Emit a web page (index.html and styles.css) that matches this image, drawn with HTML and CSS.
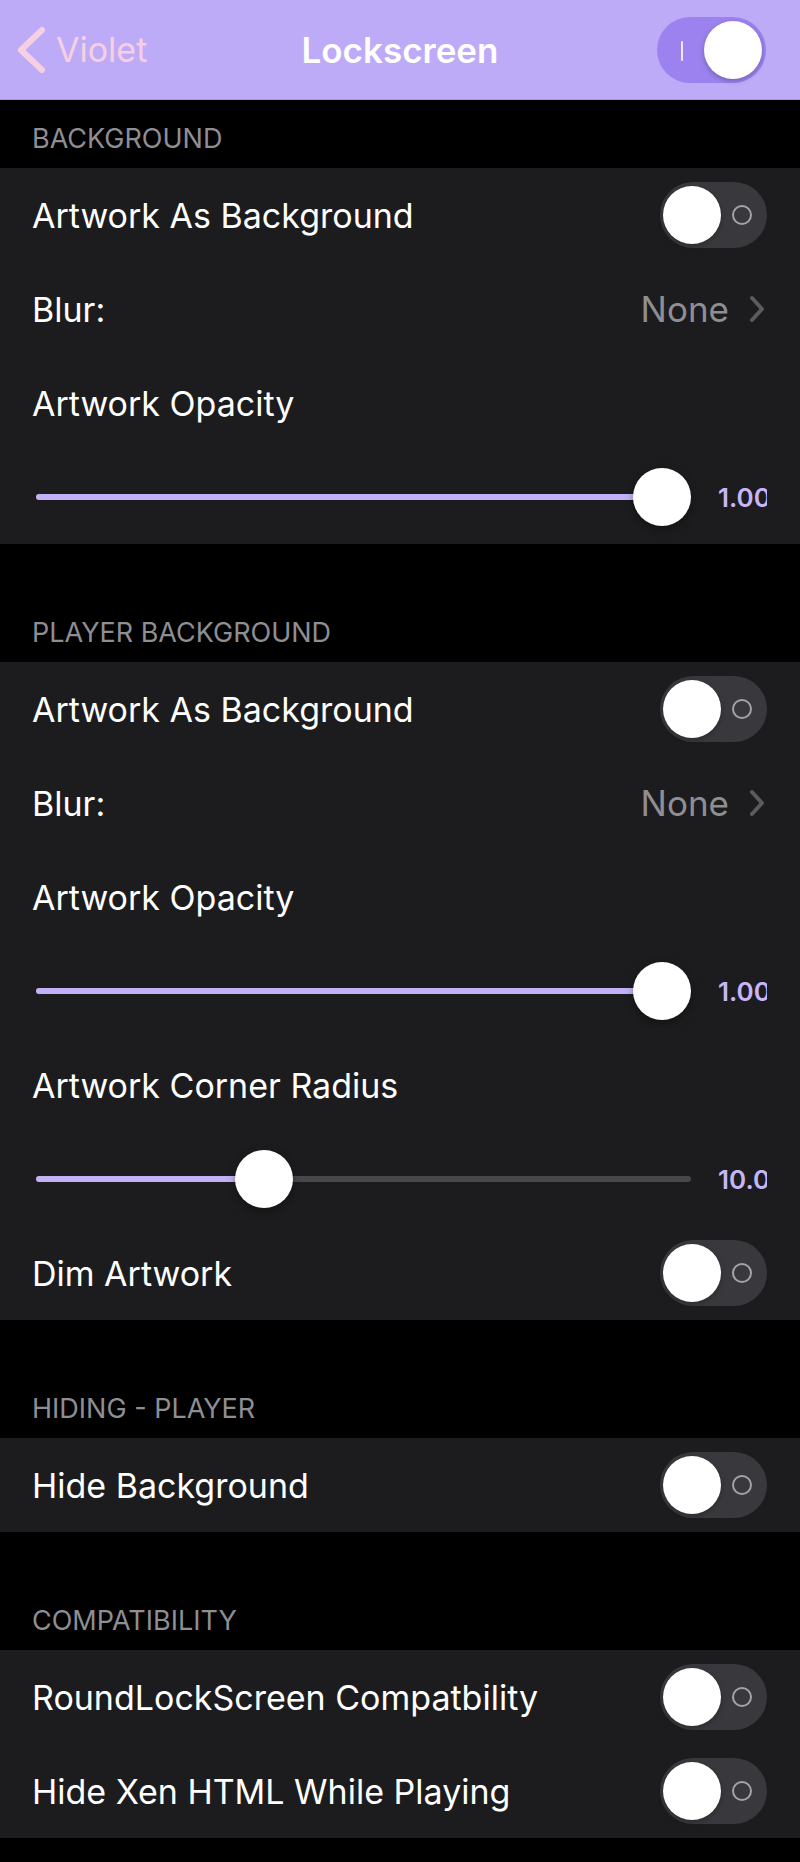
FILE: index.html
```html
<!DOCTYPE html>
<html lang="en">
<head>
  <meta charset="UTF-8">
  <meta name="viewport" content="width=device-width, initial-scale=1.0">
  <title>Lockscreen</title>
  <link rel="stylesheet" href="styles.css">
</head>
<body>
  <header class="navbar">
    <a class="back" href="#">
      <svg class="back-chevron" width="30" height="48" viewBox="0 0 30 48">
        <path d="M26 4 L5 24 L26 44" fill="none" stroke="currentColor" stroke-width="6" stroke-linecap="round" stroke-linejoin="round"/>
      </svg>
      <span>Violet</span>
    </a>
    <h1 class="title">Lockscreen</h1>
    <span class="switch on"><span class="switch-mark"></span><span class="knob"></span></span>
  </header>

  <!-- Background -->
  <section class="group first">
    <h2 class="group-title">BACKGROUND</h2>
    <div class="cells">
      <div class="cell">
        <span class="label">Artwork As Background</span>
        <span class="switch"><span class="knob"></span><span class="switch-mark"></span></span>
      </div>
      <div class="cell">
        <span class="label">Blur:</span>
        <span class="detail">None
          <svg class="chevron" width="16" height="28" viewBox="0 0 16 28"><path d="M3 3 L13 14 L3 25" fill="none" stroke="currentColor" stroke-width="4" stroke-linecap="round" stroke-linejoin="round"/></svg>
        </span>
      </div>
      <div class="cell">
        <span class="label">Artwork Opacity</span>
      </div>
      <div class="cell">
        <div class="slider">
          <div class="track"><div class="fill" style="width: 626px"></div></div>
          <span class="thumb" style="left: 597px"></span>
        </div>
        <span class="value">1.00</span>
      </div>
    </div>
  </section>

  <!-- Player background -->
  <section class="group">
    <h2 class="group-title">PLAYER BACKGROUND</h2>
    <div class="cells">
      <div class="cell">
        <span class="label">Artwork As Background</span>
        <span class="switch"><span class="knob"></span><span class="switch-mark"></span></span>
      </div>
      <div class="cell">
        <span class="label">Blur:</span>
        <span class="detail">None
          <svg class="chevron" width="16" height="28" viewBox="0 0 16 28"><path d="M3 3 L13 14 L3 25" fill="none" stroke="currentColor" stroke-width="4" stroke-linecap="round" stroke-linejoin="round"/></svg>
        </span>
      </div>
      <div class="cell">
        <span class="label">Artwork Opacity</span>
      </div>
      <div class="cell">
        <div class="slider">
          <div class="track"><div class="fill" style="width: 626px"></div></div>
          <span class="thumb" style="left: 597px"></span>
        </div>
        <span class="value">1.00</span>
      </div>
      <div class="cell">
        <span class="label">Artwork Corner Radius</span>
      </div>
      <div class="cell">
        <div class="slider">
          <div class="track"><div class="fill" style="width: 228px"></div></div>
          <span class="thumb" style="left: 199px"></span>
        </div>
        <span class="value">10.0</span>
      </div>
      <div class="cell">
        <span class="label">Dim Artwork</span>
        <span class="switch"><span class="knob"></span><span class="switch-mark"></span></span>
      </div>
    </div>
  </section>

  <!-- Hiding -->
  <section class="group">
    <h2 class="group-title">HIDING - PLAYER</h2>
    <div class="cells">
      <div class="cell">
        <span class="label">Hide Background</span>
        <span class="switch"><span class="knob"></span><span class="switch-mark"></span></span>
      </div>
    </div>
  </section>

  <!-- Compatibility -->
  <section class="group">
    <h2 class="group-title">COMPATIBILITY</h2>
    <div class="cells">
      <div class="cell">
        <span class="label">RoundLockScreen Compatbility</span>
        <span class="switch"><span class="knob"></span><span class="switch-mark"></span></span>
      </div>
      <div class="cell">
        <span class="label">Hide Xen HTML While Playing</span>
        <span class="switch"><span class="knob"></span><span class="switch-mark"></span></span>
      </div>
    </div>
  </section>
</body>
</html>
```

FILE: styles.css
```css
body {
  margin: 0;
  background: #000;
  color: #fff;
  font-family: Inter, "Noto Sans", sans-serif;
}
.navbar {
  height: 99px;
  border-bottom: 1px solid #a592e6;
  background: #bdabf7;
  display: flex;
  align-items: center;
  justify-content: space-between;
  padding: 0 34px 0 16px;
  position: relative;
}
.back {
  display: flex;
  align-items: center;
  gap: 10px;
  color: #f6d0e2;
  text-decoration: none;
  font-size: 34px;
}
.title {
  position: absolute;
  left: 0;
  right: 0;
  margin: 0;
  text-align: center;
  font-size: 35px;
  font-weight: 600;
  pointer-events: none;
}
.group {
  margin-top: 50px;
}
.group.first {
  margin-top: 0;
}
.group-title {
  margin: 0;
  height: 68px;
  box-sizing: border-box;
  padding: 0 32px 13px;
  display: flex;
  align-items: flex-end;
  font-size: 27px;
  font-weight: 400;
  color: #8e8e93;
}
.cells {
  background: #1c1c1e;
}
.cell {
  height: 94px;
  display: flex;
  align-items: center;
  justify-content: space-between;
  padding: 0 33px 0 32px;
}
.label {
  font-size: 34px;
}
.detail {
  display: flex;
  align-items: center;
  gap: 20px;
  font-size: 35px;
  color: #8e8e93;
}
.chevron {
  color: #5a5a5f;
  margin-right: 2px;
}
.switch {
  width: 107px;
  height: 66px;
  border-radius: 33px;
  background: #39393d;
  position: relative;
  flex-shrink: 0;
}
.switch .knob {
  position: absolute;
  top: 4px;
  left: 3px;
  width: 58px;
  height: 58px;
  border-radius: 50%;
  background: #fff;
  box-shadow: 0 2px 5px rgba(0, 0, 0, 0.25);
}
.switch .switch-mark {
  position: absolute;
  top: 23px;
  left: 72px;
  width: 16px;
  height: 16px;
  border: 2px solid #a3a3a8;
  border-radius: 50%;
}
.switch.on {
  width: 109px;
  background: #9b82ee;
}
.switch.on .knob {
  left: auto;
  right: 4px;
}
.switch.on .switch-mark {
  left: 24px;
  top: 24px;
  width: 2px;
  height: 20px;
  border: none;
  border-radius: 1px;
  background: #efe9ff;
}
.slider {
  position: relative;
  width: 655px;
  height: 58px;
  margin-left: 4px;
  display: flex;
  align-items: center;
}
.track {
  width: 100%;
  height: 6px;
  border-radius: 3px;
  background: #48484c;
}
.fill {
  height: 100%;
  border-radius: 3px;
  background: #c3b1f7;
}
.thumb {
  position: absolute;
  top: 0;
  width: 58px;
  height: 58px;
  border-radius: 50%;
  background: #fff;
  box-shadow: 0 3px 8px rgba(0, 0, 0, 0.35);
}
.value {
  width: 49px;
  overflow: hidden;
  white-space: nowrap;
  font-size: 26px;
  font-weight: 600;
  color: #c7b6f7;
}
```
